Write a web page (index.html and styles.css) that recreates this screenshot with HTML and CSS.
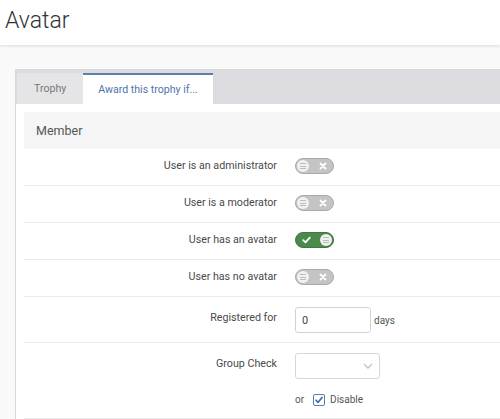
FILE: index.html
```html
<!DOCTYPE html>
<html lang="en">
<head>
    <meta charset="UTF-8">
    <meta name="viewport" content="width=device-width, initial-scale=1.0">
    <title>Avatar</title>
    <link rel="stylesheet" href="styles.css">
</head>
<body>
    <header class="page-header">
        <h1>Avatar</h1>
    </header>

    <main class="page-body">
        <div class="panel">
            <ul class="tabs">
                <li class="tab">Trophy</li>
                <li class="tab is-active">Award this trophy if...</li>
            </ul>

            <div class="panel-body">
                <h2 class="block-header">Member</h2>

                <div class="form-row">
                    <div class="row-label">User is an administrator</div>
                    <div class="row-control">
                        <span class="toggle">
                            <span class="toggle-knob"></span>
                            <svg class="toggle-icon" width="8" height="8" viewBox="0 0 8 8"><path d="M1.5 1.5l5 5M6.5 1.5l-5 5" stroke="#fff" stroke-width="1.8" stroke-linecap="round"/></svg>
                        </span>
                    </div>
                </div>

                <div class="form-row">
                    <div class="row-label">User is a moderator</div>
                    <div class="row-control">
                        <span class="toggle">
                            <span class="toggle-knob"></span>
                            <svg class="toggle-icon" width="8" height="8" viewBox="0 0 8 8"><path d="M1.5 1.5l5 5M6.5 1.5l-5 5" stroke="#fff" stroke-width="1.8" stroke-linecap="round"/></svg>
                        </span>
                    </div>
                </div>

                <div class="form-row">
                    <div class="row-label">User has an avatar</div>
                    <div class="row-control">
                        <span class="toggle is-on">
                            <svg class="toggle-icon" width="9" height="8" viewBox="0 0 9 8"><path d="M1.2 4.2l2.3 2.2L7.8 1.6" fill="none" stroke="#fff" stroke-width="1.8" stroke-linecap="round" stroke-linejoin="round"/></svg>
                            <span class="toggle-knob"></span>
                        </span>
                    </div>
                </div>

                <div class="form-row">
                    <div class="row-label">User has no avatar</div>
                    <div class="row-control">
                        <span class="toggle">
                            <span class="toggle-knob"></span>
                            <svg class="toggle-icon" width="8" height="8" viewBox="0 0 8 8"><path d="M1.5 1.5l5 5M6.5 1.5l-5 5" stroke="#fff" stroke-width="1.8" stroke-linecap="round"/></svg>
                        </span>
                    </div>
                </div>

                <div class="form-row row-input">
                    <div class="row-label">Registered for</div>
                    <div class="row-control inline">
                        <input class="text-input" type="text" value="0">
                        <span class="unit">days</span>
                    </div>
                </div>

                <div class="form-row row-input row-last">
                    <div class="row-label">Group Check</div>
                    <div class="row-control">
                        <div class="select-box">
                            <svg width="10" height="6" viewBox="0 0 10 6"><path d="M1 1l4 4 4-4" fill="none" stroke="#c2c2c2" stroke-width="1.3"/></svg>
                        </div>
                        <div class="disable-line">
                            <span>or</span>
                            <span class="checkbox">
                                <svg width="10" height="10" viewBox="0 0 10 10"><path d="M2 5.2l2 2.2 4-5" fill="none" stroke="#3f6a98" stroke-width="1.6" stroke-linecap="round" stroke-linejoin="round"/></svg>
                            </span>
                            <span>Disable</span>
                        </div>
                    </div>
                </div>
            </div>
        </div>
    </main>
</body>
</html>
```

FILE: styles.css
```css
html, body {
    margin: 0;
    padding: 0;
    overflow: hidden;
}

body {
    font-family: Roboto, "Liberation Sans", sans-serif;
    background-color: #f9f9f9;
    color: #4a4a4a;
    width: 500px;
    height: 419px;
}

.page-header {
    background-color: #fff;
    height: 45px;
    box-shadow: 0 1px 3px rgba(0,0,0,0.12);
    position: relative;
}

.page-header h1 {
    margin: 0;
    padding: 8px 0 0 5px;
    font-size: 23px;
    font-weight: 300;
    color: #333;
    line-height: 26px;
}

.page-body {
    padding: 24px 0 0 15px;
}

.panel {
    width: 640px;
    border: 1px solid #d8d8d8;
    background-color: #fff;
}

.tabs {
    list-style: none;
    margin: 0;
    padding: 3px 0 0 1px;
    display: flex;
    background-color: #dcdbe0;
    height: 31px;
}

.tab {
    padding: 0 17px;
    font-size: 10.6px;
    line-height: 31px;
    color: #777;
    background-color: #e5e5e8;
}

.tab.is-active {
    background-color: #fff;
    color: #4c77a5;
    border-top: 2px solid #5a80aa;
    line-height: 29px;
    padding: 0 15px;
}

.panel-body {
    padding: 8px 0 0 8px;
}

.block-header {
    margin: 0;
    background-color: #f5f5f5;
    font-size: 12.5px;
    font-weight: 400;
    color: #555;
    line-height: 37px;
    padding-left: 12px;
}

.form-row {
    display: grid;
    grid-template-columns: 253px 1fr;
    column-gap: 18px;
    padding: 9px 0 11px;
    border-bottom: 1px solid #ebebeb;
}

.form-row.row-input {
    padding: 10px 0 9px;
}

.form-row.row-last {
    padding-bottom: 10px;
}

.row-label {
    text-align: right;
    font-size: 10.7px;
    line-height: 16px;
}

.row-input .row-label {
    padding-top: 3px;
}

.row-control.inline {
    display: flex;
    align-items: center;
    gap: 3px;
}

.toggle {
    display: flex;
    align-items: center;
    justify-content: space-between;
    box-sizing: border-box;
    width: 39px;
    height: 16px;
    padding: 0 6px 0 1px;
    border-radius: 8px;
    background-color: #c4c4c4;
    border: 1px solid #a9a9a9;
}

.toggle.is-on {
    background-color: #4a8a4c;
    border-color: #3c7a3e;
    padding: 0 1px 0 6px;
}

.toggle-knob {
    width: 12px;
    height: 12px;
    border-radius: 50%;
    background-color: #f1f1f1;
    background-image: linear-gradient(#bdbdbd, #bdbdbd), linear-gradient(#bdbdbd, #bdbdbd), linear-gradient(#bdbdbd, #bdbdbd);
    background-size: 6px 1px;
    background-repeat: no-repeat;
    background-position: 3px 3px, 3px 5.5px, 3px 8px;
}

.toggle-icon {
    display: block;
}

.text-input {
    box-sizing: border-box;
    width: 76px;
    height: 26px;
    border: 1px solid #d3d3d3;
    border-radius: 3px;
    padding: 0 6px;
    font-family: inherit;
    font-size: 11px;
    color: #444;
    margin: 0;
}

.unit {
    font-size: 10px;
    color: #555;
}

.select-box {
    box-sizing: border-box;
    width: 85px;
    height: 26px;
    border: 1px solid #d8d8d8;
    border-radius: 3px;
    display: flex;
    align-items: center;
    justify-content: flex-end;
    padding-right: 6px;
}

.disable-line {
    display: flex;
    align-items: center;
    gap: 5px;
    margin-top: 13px;
    font-size: 10px;
    line-height: 16px;
    color: #555;
}

.checkbox {
    box-sizing: border-box;
    width: 12px;
    height: 12px;
    border: 1px solid #5d7fa5;
    border-radius: 2px;
    display: flex;
    align-items: center;
    justify-content: center;
    margin-left: 4px;
}
```
